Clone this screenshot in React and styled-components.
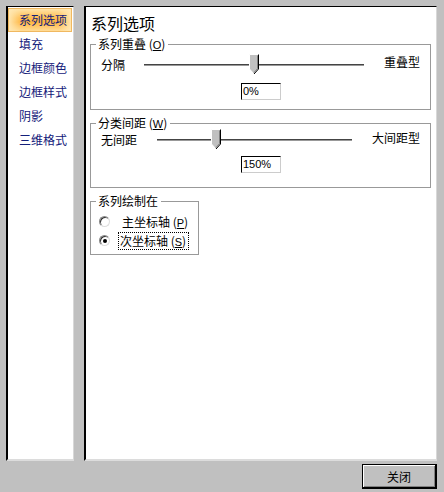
import React from 'react';
import styled, { createGlobalStyle } from 'styled-components';

const Global = createGlobalStyle`
  html, body {
    margin: 0;
    padding: 0;
    background: #c0c0c0;
  }
  body {
    font-family: "Noto Sans CJK SC", "Liberation Sans", sans-serif;
    font-size: 12px;
    color: #000;
  }
`;

const Window = styled.div`
  width: 444px;
  height: 492px;
  background: #c0c0c0;
  box-sizing: border-box;
  padding: 6px 7px 0 6px;
  display: flex;
  flex-direction: column;
  overflow: hidden;
`;

const Main = styled.div`
  display: flex;
  gap: 10px;
  height: 455px;
`;

const Sunken = styled.div`
  background: #fff;
  box-sizing: border-box;
  border-top: 1px solid #000;
  border-left: 2px solid #000;
  border-right: 1px solid #d8d8d8;
  border-bottom: 2px solid #dcdcdc;
`;

const Nav = styled(Sunken)`
  width: 68px;
  padding: 1px 1px 0 0;
  display: flex;
  flex-direction: column;
`;

const NavItem = styled.div`
  height: 24px;
  line-height: 24px;
  padding-left: 11px;
  color: #14207a;
  font-size: 12px;
  box-sizing: border-box;
  white-space: nowrap;
  ${p => p.$active && `
    border: 1px solid #f0b860;
    line-height: 22px;
    padding-left: 10px;
    background:
      linear-gradient(90deg, rgba(255,232,180,0.95) 0%, rgba(255,232,180,0) 20%, rgba(255,232,180,0) 80%, rgba(255,232,180,0.95) 100%),
      linear-gradient(180deg, #ffe4a8 0%, #ffbe50 40%, #ffb640 60%, #ffdc98 100%);
  `}
`;

const Content = styled(Sunken)`
  flex: 1;
  padding: 8px 0 0 4px;
`;

const Title = styled.div`
  font-size: 16px;
  line-height: 16px;
  margin: 0 0 6px 1px;
  color: #000;
`;

const Group = styled.fieldset`
  width: ${p => p.$w}px;
  height: ${p => p.$h}px;
  box-sizing: border-box;
  margin: 0 0 ${p => p.$mb || 0}px 0;
  padding: 0;
  border: 1px solid #999;
  min-width: 0;
  position: relative;
`;

const Legend = styled.legend`
  font-size: 12px;
  line-height: 14px;
  padding: 0 3px 0 2px;
  margin-left: 5px;
`;

const U = styled.span`
  text-decoration: underline;
  font-family: "Liberation Sans", sans-serif;
  font-size: 11px;
`;

const SliderRow = styled.div`
  display: flex;
  align-items: center;
  height: 20px;
  margin-top: ${p => p.$mt}px;
`;

const EdgeLabel = styled.span`
  width: ${p => p.$w}px;
  padding-left: ${p => p.$pl}px;
  box-sizing: border-box;
  white-space: nowrap;
  font-size: 12px;
  position: relative;
  top: ${p => p.$dy || 0}px;
`;

const Track = styled.div`
  position: relative;
  width: ${p => p.$w}px;
  height: 20px;
  &::before {
    content: '';
    position: absolute;
    left: 0;
    right: 0;
    top: ${p => p.$ty}px;
    height: 1px;
    background: #444;
    box-shadow: 0 1px 0 #999;
  }
`;

const Thumb = styled.svg`
  position: absolute;
  top: 0;
`;

const ValueBox = styled.div`
  width: 40px;
  height: 17px;
  box-sizing: border-box;
  margin: ${p => p.$mt}px 0 0 150px;
  background: #fff;
  border-top: 1px solid #000;
  border-left: 1px solid #000;
  border-right: 1px solid #ccc;
  border-bottom: 1px solid #ccc;
  font-family: "Liberation Sans", sans-serif;
  font-size: 11px;
  line-height: 15px;
  padding-left: 1px;
`;

const RadioRow = styled.div`
  display: flex;
  align-items: center;
  height: 19px;
  margin-left: 8px;
`;

const RadioDot = styled.span`
  width: 11px;
  height: 11px;
  box-sizing: border-box;
  border-radius: 50%;
  border: 1px solid #888;
  border-right-color: #ddd;
  border-bottom-color: #ddd;
  box-shadow: inset 1px 1px 0 #333;
  background: #fff;
  display: flex;
  align-items: center;
  justify-content: center;
  margin-right: ${p => (p.$checked ? 8 : 10)}px;
  &::after {
    content: '';
    display: ${p => (p.$checked ? 'block' : 'none')};
    width: 4px;
    height: 4px;
    border-radius: 50%;
    background: #000;
  }
`;

const RadioText = styled.span`
  font-size: 12px;
  line-height: 14px;
  padding: 1px 2px 0 1px;
  border: 1px dotted ${p => (p.$focus ? '#000' : 'transparent')};
  white-space: nowrap;
`;

const Footer = styled.div`
  display: flex;
  justify-content: flex-end;
  padding-top: 3px;
`;

const Button = styled.button`
  width: 75px;
  height: 25px;
  box-sizing: border-box;
  background: #c0c0c0;
  border: 1px solid #000;
  border-right-width: 2px;
  border-bottom-width: 2px;
  box-shadow: inset 1px 1px 0 #fff, inset -1px -1px 0 #808080;
  font-family: "Noto Sans CJK SC", sans-serif;
  font-size: 12px;
  padding: 0;
  color: #000;
`;

function ThumbIcon({ left }) {
  return (
    <Thumb width="11" height="21" viewBox="0 0 11 21" style={{ left }}>
      <path d="M0.5 0.5 H9.5 V15 L5 20 L0.5 15 Z" fill="#c0c0c0" stroke="#fff" />
      <path d="M9.5 0.5 V15 L5 20" fill="none" stroke="#000" />
      <path d="M8.5 1.5 V14.6 L5 18.5" fill="none" stroke="#808080" />
    </Thumb>
  );
}

function Slider({ leftLabel, rightLabel, trackWidth, leftW, rightW, pos, mt, rightDy }) {
  return (
    <SliderRow $mt={mt}>
      <EdgeLabel $w={leftW} $pl={10}>{leftLabel}</EdgeLabel>
      <Track $w={trackWidth} $ty={10}>
        <ThumbIcon left={Math.round(trackWidth * pos) - 5} />
      </Track>
      <EdgeLabel $w={rightW} $pl={20} $dy={rightDy}>{rightLabel}</EdgeLabel>
    </SliderRow>
  );
}

const navItems = ['系列选项', '填充', '边框颜色', '边框样式', '阴影', '三维格式'];

export default function App() {
  return (
    <>
      <Global />
      <Window>
        <Main>
          <Nav>
            {navItems.map((t, i) => (
              <NavItem key={t} $active={i === 0}>{t}</NavItem>
            ))}
          </Nav>
          <Content>
            <Title>系列选项</Title>
            <Group $w={341} $h={73} $mb={6}>
              <Legend>系列重叠 (<U>O</U>)</Legend>
              <Slider
                leftLabel="分隔"
                rightLabel="重叠型"
                leftW={53}
                rightW={60}
                trackWidth={220}
                pos={0.5}
                mt={2}
                rightDy={-3}
              />
              <ValueBox $mt={9}>0%</ValueBox>
            </Group>
            <Group $w={341} $h={72} $mb={6}>
              <Legend>分类间距 (<U>W</U>)</Legend>
              <Slider
                leftLabel="无间距"
                rightLabel="大间距型"
                leftW={66}
                rightW={70}
                trackWidth={195}
                pos={0.3}
                mt={-2}
                rightDy={-2}
              />
              <ValueBox $mt={7}>150%</ValueBox>
            </Group>
            <Group $w={109} $h={61}>
              <Legend>系列绘制在</Legend>
              <RadioRow style={{ marginTop: 4 }}>
                <RadioDot />
                <RadioText>主坐标轴 (<U>P</U>)</RadioText>
              </RadioRow>
              <RadioRow>
                <RadioDot $checked />
                <RadioText $focus>次坐标轴 (<U>S</U>)</RadioText>
              </RadioRow>
            </Group>
          </Content>
        </Main>
        <Footer>
          <Button>关闭</Button>
        </Footer>
      </Window>
    </>
  );
}
